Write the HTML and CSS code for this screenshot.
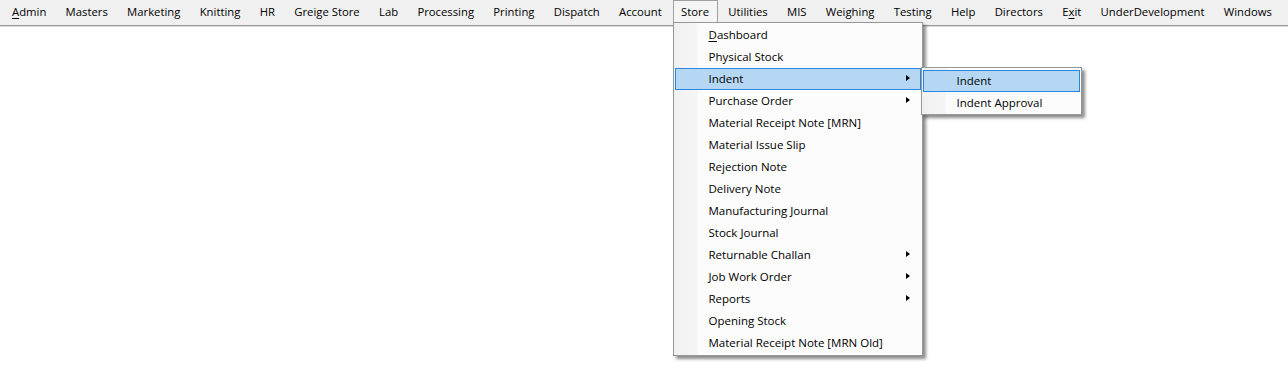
FILE: index.html
```html
<!DOCTYPE html>
<html>
<head>
<meta charset="utf-8">
<link rel="stylesheet" href="styles.css">
</head>
<body>
<div class="menubar">
  <div class="mi"><u>A</u>dmin</div>
  <div class="mi">Masters</div>
  <div class="mi">Marketing</div>
  <div class="mi">Knitting</div>
  <div class="mi">HR</div>
  <div class="mi">Greige Store</div>
  <div class="mi">Lab</div>
  <div class="mi">Processing</div>
  <div class="mi">Printing</div>
  <div class="mi">Dispatch</div>
  <div class="mi">Account</div>
  <div class="mi store">Store
    <div class="dropdown">
      <div class="di"><u>D</u>ashboard</div>
      <div class="di">Physical Stock</div>
      <div class="di sel sub">Indent
        <div class="submenu">
          <div class="di sel">Indent</div>
          <div class="di">Indent Approval</div>
        </div>
      </div>
      <div class="di sub">Purchase Order</div>
      <div class="di">Material Receipt Note [MRN]</div>
      <div class="di">Material Issue Slip</div>
      <div class="di">Rejection Note</div>
      <div class="di">Delivery Note</div>
      <div class="di">Manufacturing Journal</div>
      <div class="di">Stock Journal</div>
      <div class="di sub">Returnable Challan</div>
      <div class="di sub">Job Work Order</div>
      <div class="di sub">Reports</div>
      <div class="di">Opening Stock</div>
      <div class="di">Material Receipt Note [MRN Old]</div>
    </div>
  </div>
  <div class="mi">Utilities</div>
  <div class="mi">MIS</div>
  <div class="mi">Weighing</div>
  <div class="mi">Testing</div>
  <div class="mi">Help</div>
  <div class="mi">Directors</div>
  <div class="mi">E<u>x</u>it</div>
  <div class="mi">UnderDevelopment</div>
  <div class="mi">Windows</div>
</div>
</body>
</html>
```

FILE: styles.css
```css
html, body {
  margin: 0;
  padding: 0;
  background: #ffffff;
  height: 390px;
  overflow: hidden;
}
body {
  font-family: "Open Sans", "Noto Sans", "Liberation Sans", sans-serif;
  font-size: 11.3px;
  color: #000;
}
u { text-decoration: underline; text-underline-offset: 2px; }

.menubar {
  display: flex;
  align-items: stretch;
  height: 25px;
  padding-left: 3.5px;
  gap: 2.3px;
  background: #f0f0f0;
  border-bottom: 1px solid #9c9c9c;
  box-shadow: 0 1px 0 #d6d6d6;
  position: relative;
  z-index: 1;
}
.mi {
  display: flex;
  align-items: center;
  padding: 0 7.5px 3px 7.5px;
  border: 1px solid transparent;
  border-bottom: none;
  white-space: nowrap;
}
.store {
  position: relative;
  background: #f5f5f5;
  border-color: #a0a0a0;
}
.store::after {
  content: "";
  position: absolute;
  left: 0;
  right: 0;
  bottom: -4px;
  height: 4px;
  background: linear-gradient(90deg, #f0f0f0 0, #f6f6f6 23px, #fcfcfc 23px);
  z-index: 4;
}

.dropdown {
  position: absolute;
  left: -1px;
  top: 21px;
  width: 246px;
  padding: 1px;
  border: 1px solid #979797;
  background: linear-gradient(90deg, #f0f0f0 0, #f6f6f6 24px, #fcfcfc 24px);
  box-shadow: 3px 3px 3px rgba(0, 0, 0, 0.45);
  font-size: 11.5px;
  z-index: 3;
}
.di {
  position: relative;
  height: 22px;
  line-height: 20px;
  padding-left: 33px;
  border: 1px solid transparent;
  box-sizing: border-box;
  white-space: nowrap;
}
.di.sel {
  background: #b5d7f3;
  border-color: #2a86de;
}
.di.sub::after {
  content: "";
  position: absolute;
  right: 10px;
  top: 6px;
  width: 0;
  height: 0;
  border-top: 3.5px solid transparent;
  border-bottom: 3.5px solid transparent;
  border-left: 4px solid #000;
}
.submenu {
  position: absolute;
  left: 245px;
  top: -2px;
  width: 157px;
  padding: 2px 1px 0 1px;
  border: 1px solid #979797;
  background: linear-gradient(90deg, #f0f0f0 0, #f6f6f6 24px, #fcfcfc 24px);
  box-shadow: 3px 3px 3px rgba(0, 0, 0, 0.45);
  z-index: 5;
}
```
